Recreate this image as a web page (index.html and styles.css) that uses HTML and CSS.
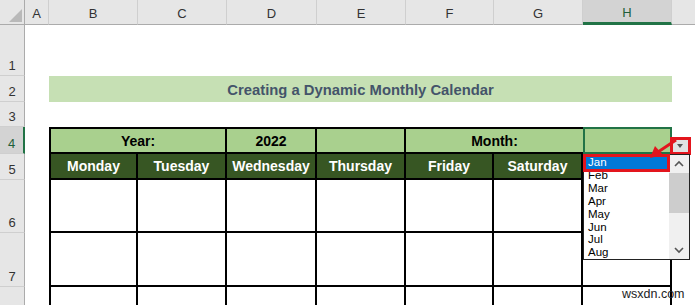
FILE: index.html
```html
<!DOCTYPE html>
<html lang="en">
<head>
    <meta charset="UTF-8" />
    <title>Dynamic Monthly Calendar</title>
    <link rel="stylesheet" href="styles.css">
</head>
<body>
    <div class="sheet">
        <div class="corner">
            <svg width="25" height="25" viewBox="0 0 25 25"><polygon points="9,22 22,22 22,9" fill="#b9b9b9"/></svg>
        </div>
        <div class="colhead">A</div>
        <div class="colhead">B</div>
        <div class="colhead">C</div>
        <div class="colhead">D</div>
        <div class="colhead">E</div>
        <div class="colhead">F</div>
        <div class="colhead">G</div>
        <div class="colhead active">H</div>
        <div class="colhead last"></div>

        <div class="rowhead">1</div>
        <div class="blank wide"></div>

        <div class="rowhead">2</div>
        <div class="blank"></div>
        <div class="title">Creating a Dynamic Monthly Calendar</div>
        <div class="blank"></div>

        <div class="rowhead">3</div>
        <div class="blank wide"></div>

        <div class="rowhead active">4</div>
        <div class="blank"></div>
        <div class="cal top first label span2">Year:</div>
        <div class="cal top label">2022</div>
        <div class="cal top label"></div>
        <div class="cal top label span2 nor">Month:</div>
        <div class="cal selected"></div>
        <div class="blank"></div>

        <div class="rowhead">5</div>
        <div class="blank"></div>
        <div class="cal first day">Monday</div>
        <div class="cal day">Tuesday</div>
        <div class="cal day">Wednesday</div>
        <div class="cal day">Thursday</div>
        <div class="cal day">Friday</div>
        <div class="cal day">Saturday</div>
        <div class="cal day"></div>
        <div class="blank"></div>

        <div class="rowhead">6</div>
        <div class="blank"></div>
        <div class="cal first"></div>
        <div class="cal"></div>
        <div class="cal"></div>
        <div class="cal"></div>
        <div class="cal"></div>
        <div class="cal"></div>
        <div class="cal"></div>
        <div class="blank"></div>

        <div class="rowhead">7</div>
        <div class="blank"></div>
        <div class="cal first"></div>
        <div class="cal"></div>
        <div class="cal"></div>
        <div class="cal"></div>
        <div class="cal"></div>
        <div class="cal"></div>
        <div class="cal"></div>
        <div class="blank"></div>

        <div class="rowhead cut"></div>
        <div class="blank"></div>
        <div class="cal first open"></div>
        <div class="cal open"></div>
        <div class="cal open"></div>
        <div class="cal open"></div>
        <div class="cal open"></div>
        <div class="cal open"></div>
        <div class="cal open"></div>
        <div class="blank"></div>
    </div>

    <div class="dd-button">
        <svg width="14" height="12" viewBox="0 0 14 12"><polygon points="4,4 10,4 7,8" fill="#555"/></svg>
    </div>
    <div class="red-box btn-box"></div>

    <div class="dropdown">
        <ul class="items">
            <li class="current">Jan</li>
            <li>Feb</li>
            <li>Mar</li>
            <li>Apr</li>
            <li>May</li>
            <li>Jun</li>
            <li>Jul</li>
            <li>Aug</li>
        </ul>
        <div class="scrollbar">
            <div class="sb-arrow">
                <svg width="12" height="8" viewBox="0 0 12 8"><polyline points="2,6 6,2 10,6" fill="none" stroke="#555" stroke-width="1.6"/></svg>
            </div>
            <div class="sb-thumb"></div>
            <div class="sb-track"></div>
            <div class="sb-arrow">
                <svg width="12" height="8" viewBox="0 0 12 8"><polyline points="2,2 6,6 10,2" fill="none" stroke="#555" stroke-width="1.6"/></svg>
            </div>
        </div>
    </div>
    <div class="red-box jan-box"></div>

    <svg class="pointer" width="695" height="305" viewBox="0 0 695 305">
        <line x1="676" y1="140" x2="658" y2="152" stroke="#e3151d" stroke-width="3"/>
        <polygon points="650,158 655,146 663,155" fill="#e3151d"/>
    </svg>

    <div class="watermark">wsxdn.com</div>
</body>
</html>
```

FILE: styles.css
```css
html, body {
    margin: 0;
    padding: 0;
    overflow: hidden;
}
body {
    width: 695px;
    height: 305px;
    position: relative;
    background: #fff;
    font-family: "Liberation Sans", Arial, sans-serif;
}
.sheet {
    display: grid;
    grid-template-columns: 25px 24px 89px 89px 90px 89px 88px 89px 89px 1fr;
    grid-template-rows: 25px 51px 26px 25px 27px 26px 53px 54px 18px;
    width: 695px;
    height: 305px;
}
.corner {
    background: #e6e6e6;
    border-right: 1px solid #ababab;
    border-bottom: 1px solid #ababab;
    box-sizing: border-box;
}
.corner svg {
    display: block;
}
.colhead {
    background: #e6e6e6;
    border-right: 1px solid #cfcfcf;
    border-bottom: 1px solid #ababab;
    box-sizing: border-box;
    display: flex;
    align-items: center;
    justify-content: center;
    font-size: 13px;
    color: #333;
    padding-top: 3px;
}
.colhead.active {
    background: #d3d3d3;
    border-bottom: 3px solid #217346;
    color: #1f5f3a;
}
.colhead.last {
    border-right: none;
}
.rowhead {
    grid-column: 1;
    background: #e6e6e6;
    border-right: 1px solid #ababab;
    border-bottom: 1px solid #cfcfcf;
    box-sizing: border-box;
    display: flex;
    align-items: flex-end;
    justify-content: center;
    font-size: 13px;
    color: #333;
    padding-bottom: 2px;
}
.rowhead.active {
    background: #d3d3d3;
    border-right: 2px solid #217346;
    color: #1f5f3a;
}
.rowhead.cut {
    border-bottom: none;
}
.blank.wide {
    grid-column: span 9;
}
.title {
    grid-column: span 7;
    background: #c6e0b4;
    color: #44546a;
    font-weight: bold;
    font-size: 14.8px;
    display: flex;
    align-items: center;
    justify-content: center;
    padding-top: 1px;
}
.cal {
    box-sizing: border-box;
    border-right: 2px solid #000;
    border-bottom: 2px solid #000;
    display: flex;
    align-items: center;
    justify-content: center;
    font-weight: bold;
    font-size: 14px;
}
.cal.first {
    border-left: 2px solid #000;
}
.cal.top {
    border-top: 2px solid #000;
}
.cal.open {
    border-bottom: none;
}
.cal.span2 {
    grid-column: span 2;
}
.cal.nor {
    border-right: none;
}
.cal.label {
    background: #a9d08e;
    color: #000;
}
.cal.selected {
    background: #a9d08e;
    border: 2px solid #217346;
}
.cal.day {
    background: #375623;
    color: #fff;
}
.dd-button {
    position: absolute;
    left: 672px;
    top: 139px;
    width: 16px;
    height: 13px;
    background: #e1e1e1;
    display: flex;
    align-items: center;
    justify-content: center;
}
.red-box {
    position: absolute;
    border: 3px solid #e3151d;
    box-sizing: border-box;
}
.btn-box {
    left: 670px;
    top: 137px;
    width: 21px;
    height: 18px;
}
.dropdown {
    position: absolute;
    left: 583px;
    top: 154px;
    width: 107px;
    height: 106px;
    box-sizing: border-box;
    border: 1px solid #222;
    background: #fff;
    display: flex;
}
.items {
    list-style: none;
    margin: 0;
    padding: 1px 1px 0 1px;
    flex: 1;
    font-size: 11.5px;
    line-height: 12.9px;
    color: #000;
}
.items li {
    padding-left: 3px;
}
.items li.current {
    background: #0078d7;
    color: #fff;
}
.scrollbar {
    width: 20px;
    display: flex;
    flex-direction: column;
    background: #f0f0f0;
}
.sb-arrow {
    height: 18px;
    display: flex;
    align-items: center;
    justify-content: center;
}
.sb-thumb {
    height: 40px;
    background: #cdcdcd;
}
.sb-track {
    flex: 1;
}
.jan-box {
    left: 583px;
    top: 154px;
    width: 87px;
    height: 18px;
}
.pointer {
    position: absolute;
    left: 0;
    top: 0;
}
.watermark {
    position: absolute;
    left: 622px;
    top: 287px;
    font-size: 12.5px;
    color: #222;
}
```
